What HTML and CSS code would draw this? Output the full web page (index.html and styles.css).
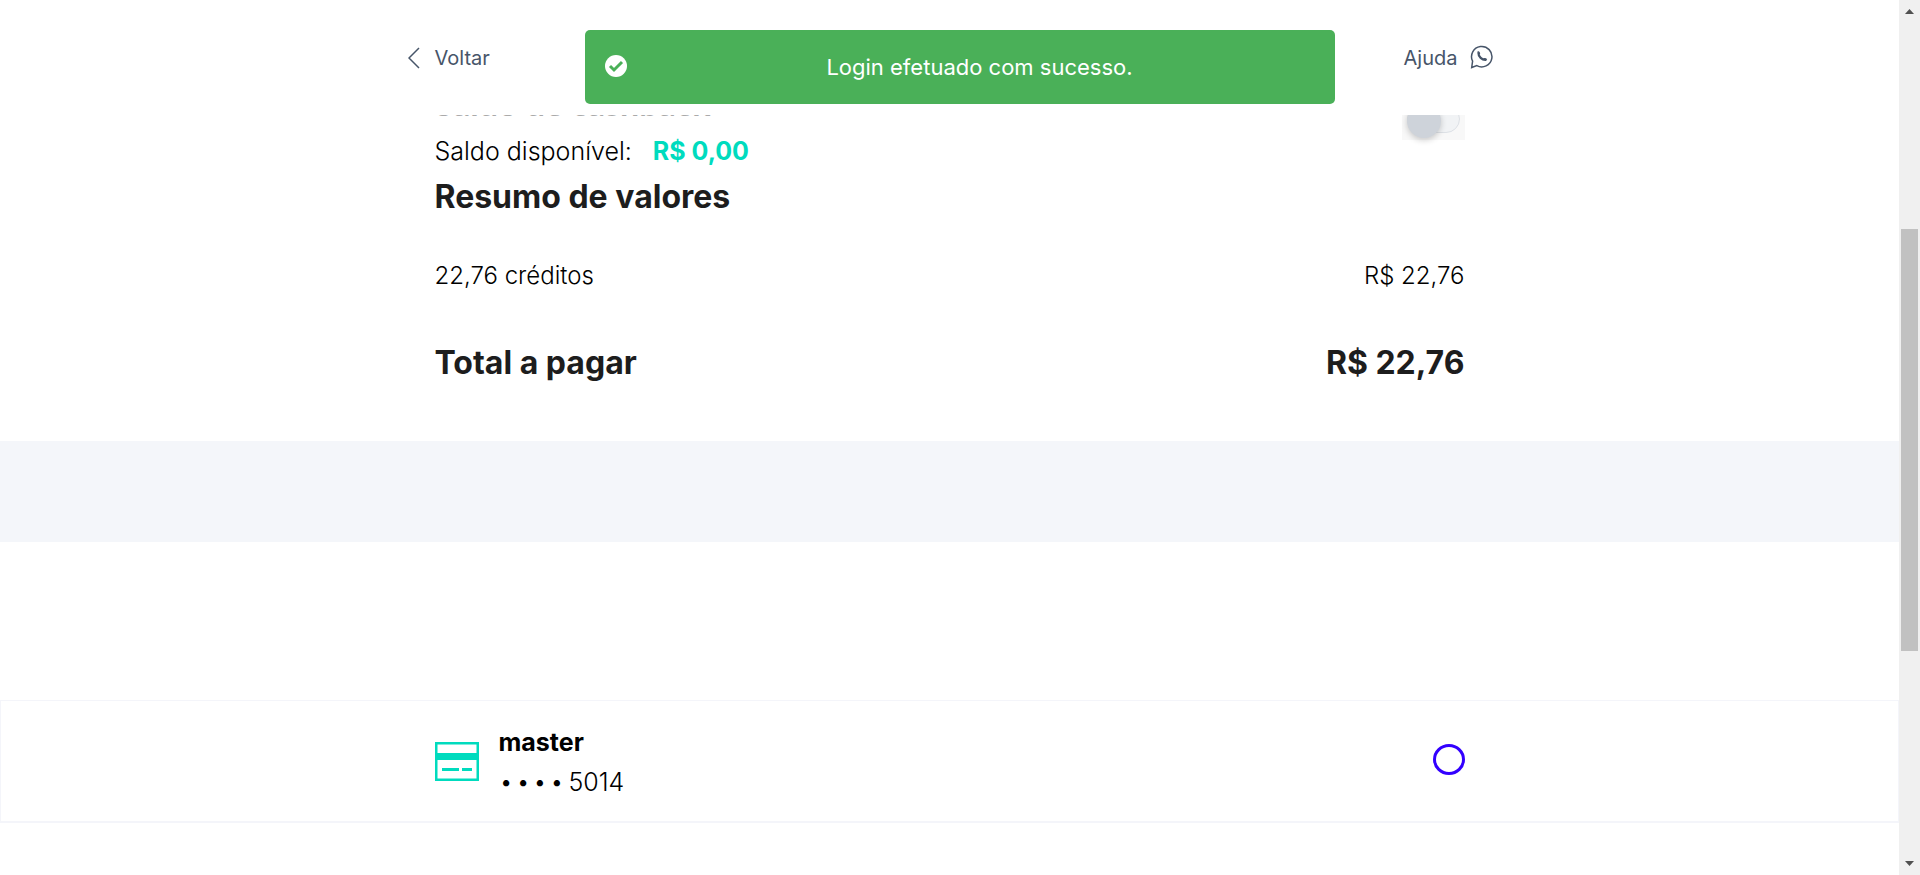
FILE: index.html
```html
<!DOCTYPE html>
<html lang="pt-BR">
<head>
<meta charset="utf-8">
<title>Pagamento</title>
<link rel="stylesheet" href="styles.css">
</head>
<body>
<div class="app">
  <div class="view">
    <header class="header">
      <div class="header-inner">
        <button class="nav-button" type="button">
          <svg class="chevron" viewBox="0 0 12 22" aria-hidden="true"><path d="M11 1 1 11l10 10"/></svg>
          Voltar
        </button>
        <button class="nav-button" type="button">
          Ajuda
          <svg class="whatsapp" viewBox="0 0 24 24" aria-hidden="true"><path d="M2.6 16.2A10.2 10.2 0 1 1 6.8 20.6L1.7 22.5Z"/><path class="phone" d="M8.3 7.3C8.2 11.5 12 15.4 16.3 14.8"/><path d="M7.8 7.2c.8-1 1.4 1 1.7 2.1M13.6 14c1.2-.5 2.5.2 3.1.8"/></svg>
        </button>
      </div>
    </header>

    <div class="toast" role="status">
      <svg class="toast-icon" viewBox="0 0 22 22" aria-hidden="true"><circle cx="11" cy="11" r="11"/><path d="m5 11 4 4 8-8"/></svg>
      <p class="toast-text">Login efetuado com sucesso.</p>
    </div>

    <main>
      <section class="summary column">
        <div class="balance-row">
          <label class="balance-title" for="use-balance">Saldo de cashback</label>
          <span class="switch-box"><input class="switch" id="use-balance" type="checkbox" role="switch"></span>
        </div>
        <p class="balance">Saldo disponível: <strong class="balance-value">R$ 0,00</strong></p>
        <h2 class="title">Resumo de valores</h2>
        <div class="line"><span>22,76 créditos</span><span>R$ 22,76</span></div>
        <div class="line total"><span>Total a pagar</span><span>R$ 22,76</span></div>
      </section>
      <div class="band"></div>
      <section class="payment">
        <div class="card">
          <label class="card-inner column" for="card-5014">
            <svg class="card-icon" viewBox="0 0 44 39" aria-hidden="true"><path class="frame" d="M1.25 1.25h41.5v36.5H1.25z"/><path d="M2 11h40v7H2zM7 26h17v3H7zM27 26h10v3H27z"/></svg>
            <span class="card-text"><strong>master</strong><span class="digits"><span class="dots">• • • •</span>5014</span></span>
            <input class="radio" id="card-5014" type="radio" name="card">
          </label>
        </div>
      </section>
    </main>
  </div>
  <div class="scrollbar" aria-hidden="true">
    <svg class="arrow" viewBox="0 0 9 5"><path d="M0 5 4.5 0 9 5z"/></svg>
    <div class="track"><div class="thumb"></div></div>
    <svg class="arrow" viewBox="0 0 9 5"><path d="M0 0h9L4.5 5z"/></svg>
  </div>
</div>
</body>
</html>
```
FILE: styles.css
```css
* { box-sizing: border-box; }
body {
  margin: 0;
  background: #fff;
  color: #000;
  font-family: Inter, "Liberation Sans", sans-serif;
  font-size: 25px;
  font-weight: 300;
  line-height: 40px;
}
p, h2 { margin: 0; }
.app { display: flex; height: 100vh; overflow: hidden; }
.view { position: relative; flex: 1; min-width: 0; overflow: hidden; }
.column { width: 100%; max-width: 1030px; margin: 0 auto; }

.header {
  position: absolute;
  inset: 0 0 auto;
  z-index: 1;
  height: 115px;
  background: #fff;
}
.header-inner {
  display: flex;
  justify-content: space-between;
  max-width: 1088px;
  margin: 0 auto;
  padding-top: 38px;
}
.nav-button {
  display: flex;
  align-items: center;
  gap: 12px;
  padding: 0;
  border: 0;
  background: none;
  color: #475569;
  font: 400 20px/40px Inter, "Liberation Sans", sans-serif;
}
.nav-button svg { fill: none; stroke: #475569; stroke-width: 1.5; }
.chevron { width: 12px; height: 22px; margin: 0 3px 0 2px; }
.whatsapp { width: 24px; height: 24px; margin-bottom: 2px; }
.nav-button .phone { stroke-width: 2.2; }

.toast {
  position: absolute;
  z-index: 2;
  top: 30px;
  left: 50%;
  display: flex;
  align-items: center;
  width: 750px;
  max-width: 100%;
  height: 74px;
  margin-left: 10px;
  padding: 0 20px;
  border-radius: 5px;
  background: #4ab058;
  color: #fff;
  transform: translateX(-50%);
}
.toast-icon { width: 22px; height: 22px; margin-bottom: 3px; fill: #fff; }
.toast-icon path { fill: none; stroke: #4ab058; stroke-width: 3; }
.toast-text { flex: 1; padding-left: 18px; text-align: center; font-size: 22px; font-weight: 400; }

.summary { height: 441px; padding-top: 84px; }
.balance-row { display: flex; justify-content: space-between; height: 47px; }
.title, .total { color: #1d1d1d; font-size: 32px; font-weight: 700; }
.balance-title {
  color: #aaa;
  font-family: Lato, Inter, sans-serif;
  font-size: 34px;
  font-weight: 700;
  line-height: 38px;
}
.switch-box {
  display: flex;
  align-items: flex-end;
  width: 63px;
  height: 56px;
  padding: 0 5px 7px;
  background: #f8f8f8;
}
.switch {
  position: relative;
  appearance: none;
  width: 53px;
  height: 28px;
  margin: 0;
  border: 1px solid #dde1e6;
  border-radius: 14px;
  background: #f1f3f5;
}
.switch::before {
  content: "";
  position: absolute;
  bottom: -6px;
  left: -1px;
  width: 34px;
  height: 34px;
  border-radius: 50%;
  background: #ced3da;
  box-shadow: 0 2px 6px #0003;
}
.balance-value { margin-left: 14px; color: #00dbbe; font-weight: 700; }
.title { line-height: 52px; }
.line { display: flex; justify-content: space-between; margin-top: 33px; font-size: 24px; }
.total { margin-top: 47px; font-size: 32px; }

.band { height: 101px; background: #f4f6fa; }
.payment { padding-top: 158px; }
.card { border: 1px solid #f4f5fa; border-bottom-width: 2px; }
.card-inner { display: flex; align-items: center; height: 120px; }
.card-icon { width: 44px; height: 39px; fill: #00dbbe; }
.card-icon .frame { fill: none; stroke: #00dbbe; stroke-width: 2.5; }
.card-text { flex: 1; display: grid; margin-left: 20px; padding-top: 2px; }
.card-text strong { font-weight: 700; }
.dots { margin: 0 6px 0 2px; font-size: 20px; font-weight: 400; line-height: 20px; vertical-align: 2px; }
.radio {
  appearance: none;
  width: 32px;
  height: 31px;
  margin: 0 0 3px;
  border: 3px solid #3300ff;
  border-radius: 50%;
}

.scrollbar {
  display: flex;
  flex-direction: column;
  align-items: center;
  width: 21px;
  padding: 9px 2px;
  background: #f0f0f0;
}
.arrow { width: 9px; height: 5px; fill: #505050; }
.track { flex: 1; align-self: stretch; padding-top: 215px; }
.thumb { width: 17px; height: 422px; background: #c1c1c1; }
```
